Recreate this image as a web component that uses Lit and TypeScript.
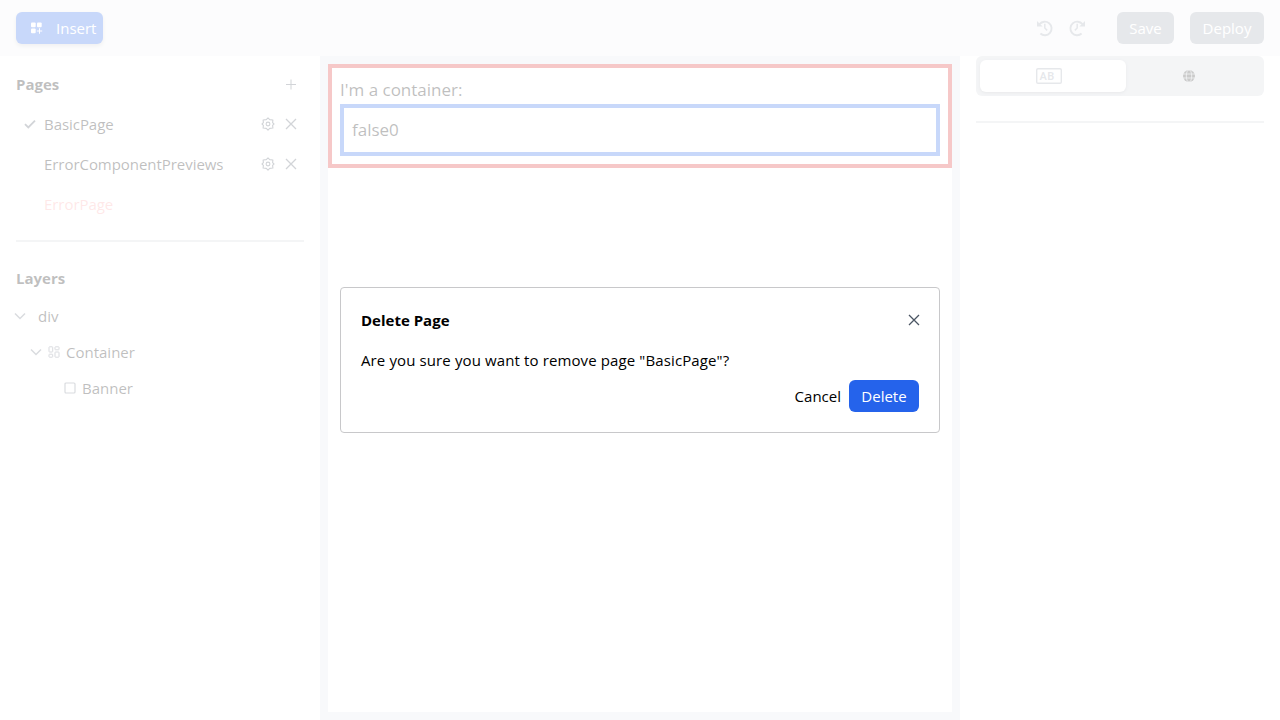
import { LitElement, html, svg, css } from "lit";
import { customElement } from "lit/decorators.js";

const chevron = html`<svg class="chevron" width="12" height="12" viewBox="0 0 12 12"><path d="M1 3.5 6 8.5 11 3.5" fill="none" stroke="#6b7280" stroke-width="1.5"/></svg>`;
const cross = html`<svg width="12" height="12" viewBox="0 0 12 12"><path d="M1 1 11 11M11 1 1 11" fill="none" stroke="#4b5563" stroke-width="1.3"/></svg>`;
const gear = html`<svg width="14" height="14" viewBox="0 0 14 14" fill="none" stroke="#4b5563" stroke-width="1.1" stroke-linejoin="round"><path d="M7 .9 8.7 2.6 11.9 3 11.6 5.6 13 7 11.6 8.4 11.9 11 8.7 11.4 7 13.1 5.3 11.4 2.1 11 2.4 8.4 1 7 2.4 5.6 2.1 3 5.3 2.6z"/><circle cx="7" cy="7" r="1.9"/></svg>`;
const clock = svg`<path d="M2.7 4.4A7.2 7.2 0 1 1 3.6 14.4" fill="none" stroke="#9ca3af" stroke-width="2"/><path d="M0 1v6h6z" fill="#9ca3af"/><path d="M8.3 4v4.5L10.8 11" fill="none" stroke="#9ca3af" stroke-width="1.6"/>`;

@customElement("app-root")
export class AppRoot extends LitElement {
  static styles = css`
    :host { display: block; position: relative; width: 1280px; height: 720px; overflow: hidden; background: #fff; color: #000; font: 400 15px/24px "Open Sans", "Noto Sans", sans-serif; }
    * { box-sizing: border-box; }
    svg { display: block; flex: none; }
    span { white-space: nowrap; }
    .app { display: flex; flex-direction: column; height: 720px; }
    header { height: 56px; flex: none; background: #f3f4f6; display: flex; align-items: center; padding: 0 16px; }
    .btn { height: 32px; border-radius: 6px; color: #fff; display: flex; align-items: center; justify-content: center; }
    .insert { width: 87px; background: #2563eb; justify-content: flex-start; padding-left: 14px; gap: 12px; box-shadow: 0 2px 4px #0003; }
    .history { display: flex; gap: 16px; margin-left: auto; margin-right: 32px; }
    .flip { transform: scaleX(-1); }
    .save { width: 57px; background: #9ca3af; margin-right: 16px; }
    .deploy { width: 74px; background: #9ca3af; }
    .body { flex: 1; display: grid; grid-template-columns: 320px 640px 320px; min-height: 0; }
    .left { padding: 16px 16px 0; }
    .title { font-weight: 700; display: flex; align-items: center; height: 24px; }
    .title svg { margin-left: auto; margin-right: 8px; }
    .pages { padding-top: 8px; letter-spacing: -.05px; }
    .page { height: 40px; display: flex; align-items: center; padding: 0 7px 0 8px; }
    .slot { width: 20px; }
    .tools { display: flex; gap: 10px; margin-left: auto; align-items: center; }
    .error { color: #fca5a5; }
    .rule { height: 2px; background: #d1d5db; }
    .pages + .rule { margin: 16px 0 24px; }
    .layers { padding-top: 8px; }
    .layer { height: 36px; display: flex; align-items: center; }
    .root { margin-left: -2px; gap: 12px; }
    .child { padding-left: 14px; gap: 6px; }
    .leaf { padding-left: 48px; gap: 6px; }
    .canvas { padding: 8px; background: #e2e8f0; }
    .sheet { height: 648px; background: #fff; font-size: 17px; line-height: 28px; }
    .outer { height: 104px; border: 4px solid #dc2626; padding: 8px; }
    .inner { height: 52px; border: 4px solid #2563eb; padding: 8px; }
    .right { padding: 0 16px; }
    .tabs { height: 40px; display: grid; grid-template-columns: 146px 1fr; padding: 4px; border-radius: 6px; background: #d1d5db; margin-bottom: 25px; }
    .tab { display: flex; align-items: center; justify-content: center; padding-right: 8px; }
    .active { border-radius: 6px; background: #fff; box-shadow: 0 1px 3px #0003; }
    .ab { width: 26px; height: 16px; border-radius: 2px; box-shadow: inset 0 0 0 1.4px #9ca3af; color: #9ca3af; font: 600 11px/17px Roboto, sans-serif; padding-left: 3.5px; letter-spacing: .4px; }
    .veil { position: absolute; inset: 0; background: rgba(255,255,255,.75); display: flex; align-items: center; justify-content: center; }
    .dialog { width: 600px; height: 146px; background: #fff; border: 1px solid #c8c8ca; border-radius: 4px; padding: 20px; }
    .dialog .title svg { margin-right: -1px; }
    .message { margin-top: 16px; letter-spacing: .12px; }
    .actions { display: flex; justify-content: flex-end; align-items: center; gap: 8px; margin-top: 8px; }
    .delete { width: 70px; background: #2563eb; }
  `;

  render() {
    return html`
      <div class="app">
        <header>
          <div class="btn insert"><svg width="14" height="14" viewBox="0 0 14 14" fill="#fff"><rect x="1" y="1.5" width="4.7" height="4.7" rx="1"/><rect x="7" y="1.5" width="4.7" height="4.7" rx="1"/><rect x="1" y="7.5" width="4.7" height="4.7" rx="1"/><path d="M6.8 9.5h2.2V7.3h1v2.2h2.2v1H10v2.2H9v-2.2H6.8z"/></svg><span>Insert</span></div>
          <div class="history">
            <svg width="16" height="17" viewBox="0 0 17 18">${clock}</svg>
            <svg class="flip" width="16" height="17" viewBox="0 0 17 18">${clock}</svg>
          </div>
          <div class="btn save"><span>Save</span></div>
          <div class="btn deploy"><span>Deploy</span></div>
        </header>
        <div class="body">
          <div class="left">
            <div class="title"><span>Pages</span><svg width="10" height="11" viewBox="0 0 10 11"><path d="M0 5.5h10M5 .5v10" stroke="#4b5563"/></svg></div>
            <div class="pages">
              <div class="page"><div class="slot"><svg width="12" height="12" viewBox="0 0 12 12"><path d="M1 6.2 4.3 9.5 11 2.7" fill="none" stroke="#4b5563" stroke-width="1.8"/></svg></div><span>BasicPage</span><div class="tools">${gear}${cross}</div></div>
              <div class="page"><div class="slot"></div><span>ErrorComponentPreviews</span><div class="tools">${gear}${cross}</div></div>
              <div class="page error"><div class="slot"></div><span>ErrorPage</span></div>
            </div>
            <div class="rule"></div>
            <div class="title"><span>Layers</span></div>
            <div class="layers">
              <div class="layer root">${chevron}<span>div</span></div>
              <div class="layer child">${chevron}<svg width="12" height="12" viewBox="0 0 12 12" fill="none" stroke="#6b7280"><rect x="1" y=".8" width="3.7" height="5.2" rx=".5"/><rect x="7" y=".8" width="4" height="3" rx=".5"/><rect x="1" y="8.2" width="3.7" height="3" rx=".5"/><rect x="7" y="6" width="4" height="5.2" rx=".5"/></svg><span>Container</span></div>
              <div class="layer leaf"><svg width="12" height="12" viewBox="0 0 12 12"><rect x="1" y="1" width="10" height="10" rx="1" fill="none" stroke="#6b7280" stroke-width="1.2"/></svg><span>Banner</span></div>
            </div>
          </div>
          <div class="canvas"><div class="sheet"><div class="outer"><span>I'm a container:</span><div class="inner"><span>false0</span></div></div></div></div>
          <div class="right">
            <div class="tabs">
              <div class="tab active"><div class="ab">AB</div></div>
              <div class="tab"><svg width="12" height="12" viewBox="0 0 12 12"><circle cx="6" cy="6" r="6" fill="#333"/><path d="M0 4h12M0 8h12" stroke="#d1d5db" stroke-width=".8"/><ellipse cx="6" cy="6" rx="2.7" ry="6.2" fill="none" stroke="#d1d5db" stroke-width=".8"/></svg></div>
            </div>
            <div class="rule"></div>
          </div>
        </div>
      </div>
      <div class="veil">
        <div class="dialog">
          <div class="title"><span>Delete Page</span>${cross}</div>
          <div class="message"><span>Are you sure you want to remove page "BasicPage"?</span></div>
          <div class="actions"><span>Cancel</span><div class="btn delete"><span>Delete</span></div></div>
        </div>
      </div>`;
  }
}
